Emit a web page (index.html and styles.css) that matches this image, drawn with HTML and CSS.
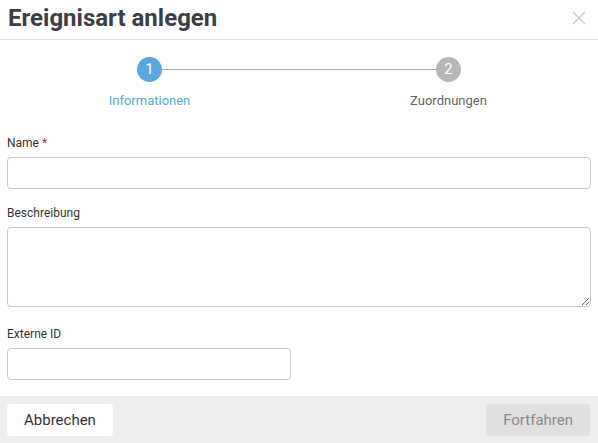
FILE: index.html
```html
<!DOCTYPE html>
<html lang="de">
<head>
    <meta charset="UTF-8">
    <title>Ereignisart anlegen</title>
    <link rel="stylesheet" href="styles.css">
</head>
<body>
    <div class="dialog">
        <div class="dialog-header">
            <h1>Ereignisart anlegen</h1>
            <span class="close">
                <svg width="14" height="14" viewBox="0 0 14 14"><path d="M1 1L13 13M13 1L1 13" stroke="#c8c8c8" stroke-width="1.2" fill="none"/></svg>
            </span>
        </div>

        <div class="stepper">
            <div class="step step-first active">
                <div class="step-circle">1</div>
                <div class="step-label">Informationen</div>
            </div>
            <div class="step step-last">
                <div class="step-circle">2</div>
                <div class="step-label">Zuordnungen</div>
            </div>
        </div>

        <form class="dialog-body">
            <div class="field">
                <label>Name <span class="required">*</span></label>
                <input type="text" class="input">
            </div>
            <div class="field field-tall">
                <label>Beschreibung</label>
                <textarea class="input textarea"></textarea>
            </div>
            <div class="field">
                <label>Externe ID</label>
                <input type="text" class="input input-half">
            </div>
        </form>

        <div class="dialog-footer">
            <button class="btn">Abbrechen</button>
            <button class="btn btn-disabled">Fortfahren</button>
        </div>
    </div>
</body>
</html>
```

FILE: styles.css
```css
body {
    margin: 0;
    font-family: Roboto, "Liberation Sans", sans-serif;
    color: #333;
    background: #fff;
}

.dialog {
    width: 598px;
    height: 443px;
    display: flex;
    flex-direction: column;
}

.dialog-header {
    height: 40px;
    border-bottom: 1px solid #ddd;
    display: flex;
    align-items: center;
    justify-content: space-between;
    padding: 0 12px 0 8px;
}

.dialog-header h1 {
    margin: 0;
    font-size: 24px;
    font-weight: 700;
    color: #3b3e45;
    line-height: 1;
    padding-bottom: 3px;
}

.close {
    display: flex;
    padding-bottom: 4px;
}

/* Stepper */
.stepper {
    display: flex;
    margin-top: 17px;
}

.step {
    flex: 1;
    display: flex;
    flex-direction: column;
    align-items: center;
    position: relative;
}

.step-first::after,
.step-last::before {
    content: "";
    position: absolute;
    top: 12px;
    height: 1px;
    background: #a9a9a9;
    width: 50%;
}

.step-first::after {
    left: 50%;
}

.step-last::before {
    right: 50%;
}

.step-circle {
    width: 25px;
    height: 25px;
    border-radius: 50%;
    background: #b7b7b7;
    color: #fff;
    font-size: 15px;
    line-height: 25px;
    text-align: center;
    position: relative;
    z-index: 1;
}

.step-label {
    margin-top: 11px;
    font-size: 13px;
    line-height: 16px;
    color: #666;
}

.step.active .step-circle {
    background: #5aa7df;
}

.step.active .step-label {
    color: #5aa7df;
}

/* Form */
.dialog-body {
    flex: 1;
    padding: 26px 7px 0;
}

.field {
    margin-bottom: 16px;
}

.field-tall {
    margin-bottom: 19px;
}

.field label {
    display: block;
    font-size: 12px;
    line-height: 16px;
    margin-bottom: 6px;
    color: #333;
}

.required {
    color: #b03030;
}

.input {
    display: block;
    box-sizing: border-box;
    width: 100%;
    height: 32px;
    border: 1px solid #c8c8c8;
    border-radius: 4px;
    font-family: inherit;
    font-size: 13px;
    padding: 6px 8px;
    margin: 0;
    background: #fff;
}

.textarea {
    height: 80px;
    resize: vertical;
}

.input-half {
    width: 284px;
}

/* Footer */
.dialog-footer {
    height: 48px;
    background: #eee;
    display: flex;
    align-items: center;
    justify-content: space-between;
    padding: 0 8px 0 7px;
}

.btn {
    height: 32px;
    border: none;
    border-radius: 4px;
    background: #fff;
    color: #333;
    font-family: inherit;
    font-size: 15px;
    padding: 0 17px;
    cursor: pointer;
}

.btn-disabled {
    background: #e0e0e0;
    color: #8a8a8a;
    cursor: default;
}
```
